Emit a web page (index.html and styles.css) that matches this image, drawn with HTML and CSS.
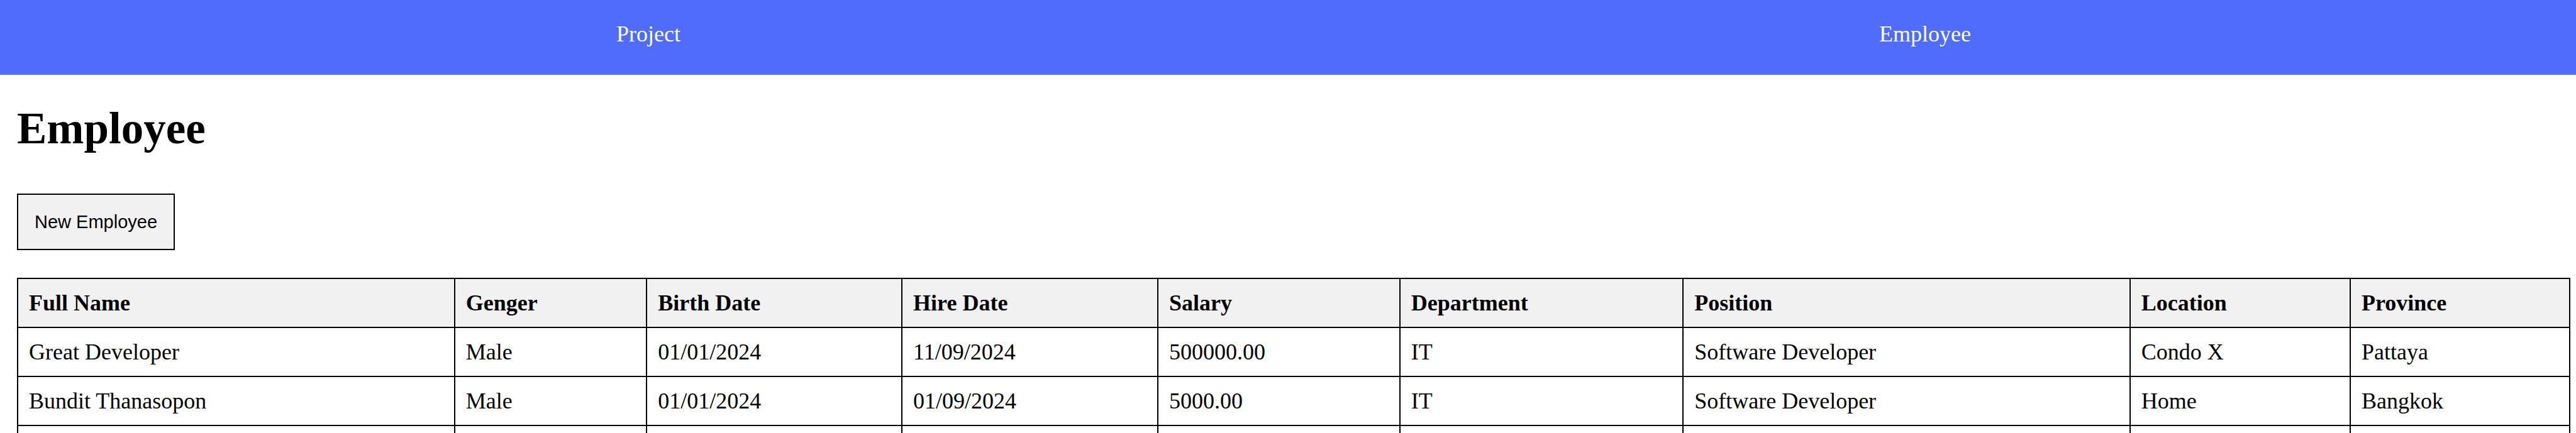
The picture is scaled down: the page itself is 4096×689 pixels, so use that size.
FILE: index.html
```html
<!DOCTYPE html>
<html lang="en">
<head>
  <meta charset="utf-8">
  <title>Employee</title>
  <link rel="stylesheet" href="styles.css">
</head>
<body>
  <nav class="nav">
    <a class="nav-link" href="#project">Project</a>
    <a class="nav-link" href="#employee">Employee</a>
  </nav>
  <main class="page">
    <h1 class="title">Employee</h1>
    <button class="new-button" type="button">New Employee</button>
    <table class="table">
      <colgroup>
        <col class="col-name">
        <col class="col-gender">
        <col class="col-birth">
        <col class="col-hire">
        <col class="col-salary">
        <col class="col-department">
        <col class="col-position">
        <col class="col-location">
        <col class="col-province">
      </colgroup>
      <thead>
        <tr>
          <th scope="col">Full Name</th>
          <th scope="col">Genger</th>
          <th scope="col">Birth Date</th>
          <th scope="col">Hire Date</th>
          <th scope="col">Salary</th>
          <th scope="col">Department</th>
          <th scope="col">Position</th>
          <th scope="col">Location</th>
          <th scope="col">Province</th>
        </tr>
      </thead>
      <tbody>
        <tr>
          <td>Great Developer</td>
          <td>Male</td>
          <td>01/01/2024</td>
          <td>11/09/2024</td>
          <td>500000.00</td>
          <td>IT</td>
          <td>Software Developer</td>
          <td>Condo X</td>
          <td>Pattaya</td>
        </tr>
        <tr>
          <td>Bundit Thanasopon</td>
          <td>Male</td>
          <td>01/01/2024</td>
          <td>01/09/2024</td>
          <td>5000.00</td>
          <td>IT</td>
          <td>Software Developer</td>
          <td>Home</td>
          <td>Bangkok</td>
        </tr>
        <tr>
          <td></td><td></td><td></td><td></td><td></td><td></td><td></td><td></td><td></td>
        </tr>
      </tbody>
    </table>
  </main>
</body>
</html>
```

FILE: styles.css
```css
* {
  box-sizing: border-box;
}

body {
  margin: 0;
  background: #ffffff;
  color: #000000;
  font-family: "Liberation Serif", "Times New Roman", serif;
  font-size: 36px;
  line-height: 42px;
}

.nav {
  display: flex;
  justify-content: space-around;
  padding: 33px 9px 44px 27px;
  background: #4f6cfd;
}

.nav-link {
  color: #ffffff;
  text-decoration: none;
}

.page {
  display: flex;
  flex-direction: column;
  align-items: flex-start;
  padding: 44px 9px 0 27px;
}

.title {
  margin: 0 0 63px;
  font-size: 71px;
  line-height: 82px;
}

.new-button {
  margin: 0 0 44px;
  padding: 26px;
  border: 2px solid #000000;
  border-radius: 0;
  background: #f1f1f1;
  color: #000000;
  font-family: "Liberation Sans", Arial, sans-serif;
  font-size: 29px;
  line-height: 34px;
}

.table {
  width: 100%;
  border-collapse: collapse;
  table-layout: fixed;
}

.table th,
.table td {
  padding: 17px;
  border: 2px solid #000000;
  text-align: left;
}

.table th {
  background: #f1f1f1;
}

.col-name { width: 17.12%; }
.col-gender { width: 7.53%; }
.col-birth { width: 10%; }
.col-hire { width: 10.03%; }
.col-salary { width: 9.48%; }
.col-department { width: 11.1%; }
.col-position { width: 17.51%; }
.col-location { width: 8.63%; }
.col-province { width: 8.6%; }
```
